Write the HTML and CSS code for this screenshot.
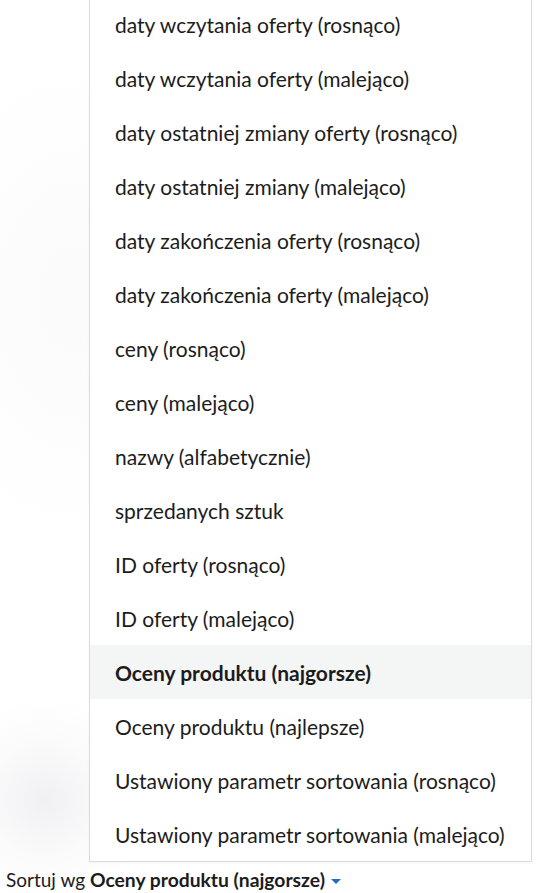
FILE: index.html
```html
<!DOCTYPE html>
<html lang="pl">
<head>
<meta charset="utf-8">
<title>Sortuj</title>
<link rel="stylesheet" href="styles.css">
</head>
<body>
<div class="page">
  <div class="backdrop">
    <div class="blob blob-a"></div>
    <div class="blob blob-b"></div>
  </div>
  <div class="sort">
    <ul class="menu">
      <li class="item">daty wczytania oferty (rosnąco)</li>
      <li class="item">daty wczytania oferty (malejąco)</li>
      <li class="item">daty ostatniej zmiany oferty (rosnąco)</li>
      <li class="item">daty ostatniej zmiany (malejąco)</li>
      <li class="item">daty zakończenia oferty (rosnąco)</li>
      <li class="item">daty zakończenia oferty (malejąco)</li>
      <li class="item">ceny (rosnąco)</li>
      <li class="item">ceny (malejąco)</li>
      <li class="item">nazwy (alfabetycznie)</li>
      <li class="item">sprzedanych sztuk</li>
      <li class="item">ID oferty (rosnąco)</li>
      <li class="item">ID oferty (malejąco)</li>
      <li class="item item-active">Oceny produktu (najgorsze)</li>
      <li class="item">Oceny produktu (najlepsze)</li>
      <li class="item">Ustawiony parametr sortowania (rosnąco)</li>
      <li class="item">Ustawiony parametr sortowania (malejąco)</li>
    </ul>
    <div class="trigger">Sortuj wg <b class="current">Oceny produktu (najgorsze)</b><span class="caret"></span></div>
  </div>
</div>
</body>
</html>
```
FILE: styles.css
```css
html, body {
  margin: 0;
  padding: 0;
  background: #ffffff;
}
body {
  font-family: Lato, "Noto Sans", sans-serif;
  color: #1c1c1c;
  overflow: hidden;
}
.page {
  position: relative;
  height: 893px;
  display: flex;
  flex-direction: column;
  justify-content: flex-end;
}
.backdrop {
  position: absolute;
  inset: 0;
  overflow: hidden;
}
.blob {
  position: absolute;
  border-radius: 50%;
}
.blob-a {
  left: -60px;
  top: 700px;
  width: 210px;
  height: 200px;
  background: radial-gradient(circle, rgba(230,230,234,0.6) 0%, rgba(240,240,243,0.3) 40%, rgba(255,255,255,0) 70%);
}
.blob-b {
  left: -80px;
  top: 60px;
  width: 300px;
  height: 480px;
  background: radial-gradient(ellipse, rgba(246,246,248,0.5) 0%, rgba(255,255,255,0) 70%);
}
.sort {
  position: relative;
  padding: 0 0 2px 6px;
}
.menu {
  position: absolute;
  left: 89px;
  bottom: calc(100% + 7px);
  width: 441px;
  margin: 0;
  padding: 0;
  list-style: none;
  background: #ffffff;
  border: 1px solid #dcdcdc;
  border-top: none;
  box-shadow: 0 1px 3px rgba(0,0,0,0.04);
}
.item {
  height: 54px;
  display: flex;
  align-items: center;
  padding: 0 20px 0 25px;
  font-size: 21px;
  white-space: nowrap;
}
.item-active {
  background: #f4f5f5;
  font-weight: 700;
}
.trigger {
  font-size: 19px;
  line-height: 22px;
  display: flex;
  align-items: center;
  white-space: pre;
}
.current {
  font-weight: 700;
  font-size: 19.3px;
}
.caret {
  width: 0;
  height: 0;
  margin-left: 6px;
  margin-top: 2px;
  border-left: 5px solid transparent;
  border-right: 5px solid transparent;
  border-top: 5px solid #1f6fc5;
}
```
